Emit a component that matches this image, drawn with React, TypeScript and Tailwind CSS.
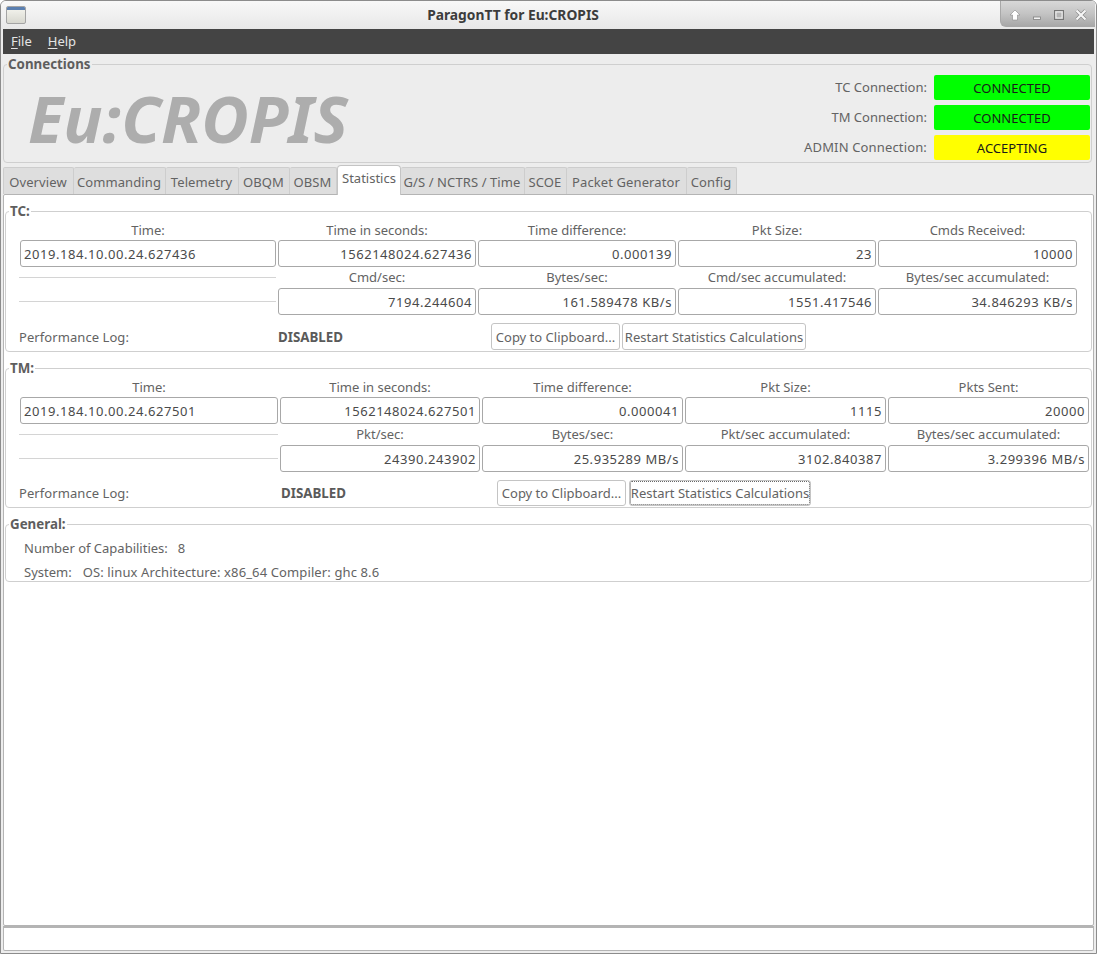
import type { ReactNode } from 'react'

const FONT = "font-['Noto_Sans',sans-serif]"

const TABS = [
  { name: 'Overview', w: 'w-[71px]' },
  { name: 'Commanding', w: 'w-[92px]' },
  { name: 'Telemetry', w: 'w-[73px]' },
  { name: 'OBQM', w: 'w-[51px]' },
  { name: 'OBSM', w: 'w-[47px]' },
  { name: 'Statistics', w: 'w-[64px]', active: true },
  { name: 'G/S / NCTRS / Time', w: 'w-[124px]' },
  { name: 'SCOE', w: 'w-[42px]' },
  { name: 'Packet Generator', w: 'w-[120px]' },
  { name: 'Config', w: 'w-[50px]' },
]

function Label({ children, tall }: { children: ReactNode; tall?: boolean }) {
  return (
    <div className={`${tall ? 'h-[21px]' : 'h-[20px]'} leading-[20px] text-center whitespace-nowrap`}>{children}</div>
  )
}

function Field({ value, left }: { value: string; left?: boolean }) {
  return (
    <div
      className={`h-[27px] leading-[27px] border border-[#a8a8a8] rounded-[3px] bg-white text-[#4a4a4a] px-[3px] whitespace-nowrap overflow-hidden tracking-[0.55px] ${
        left ? 'text-left' : 'text-right'
      }`}
    >
      {value}
    </div>
  )
}

function Status({ label, value, color, spacing }: { label: string; value: string; color: string; spacing: string }) {
  return (
    <div className="flex items-center h-[25px] justify-end">
      <span className={`mr-[7px] mt-[1px] ${spacing}`}>{label}</span>
      <div className={`w-[156px] h-[25px] leading-[26px] text-center rounded-[2px] text-[#1a1a1a] ${color}`}>
        {value}
      </div>
    </div>
  )
}

function Group({ title, className, children }: { title: string; className: string; children: ReactNode }) {
  return (
    <div className={`relative border border-[#cfcfcf] rounded-[4px] ${className}`}>
      <div className="absolute left-[3px] top-[-11px] h-[20px] leading-[20px] px-[1px] bg-white font-bold text-[#5e5e5e] text-[13.33px]">
        {title}
      </div>
      {children}
    </div>
  )
}

type StatsProps = {
  cols: string
  time: string
  seconds: string
  diff: string
  size: string
  countLabel: string
  count: string
  rateLabel: string
  rate: string
  bytes: string
  rateAccLabel: string
  rateAcc: string
  bytesAcc: string
  logWidth: string
  disabledWidth: string
  textOffset: string
  buttonSize: string
  buttonGap: string
  restartW: string
  focused?: boolean
}

function Stats(p: StatsProps) {
  return (
    <>
      <div className={`grid ${p.cols} gap-x-[2px] pl-[14px]`}>
        <Label>Time:</Label>
        <Label>Time in seconds:</Label>
        <Label>Time difference:</Label>
        <Label>Pkt Size:</Label>
        <Label>{p.countLabel}</Label>
        <Field value={p.time} left />
        <Field value={p.seconds} />
        <Field value={p.diff} />
        <Field value={p.size} />
        <Field value={p.count} />
        <div className="-ml-[1px]">
          <div className="mt-[10px] h-px bg-[#d4d4d4]" />
          <div className="mt-[23px] h-px bg-[#d4d4d4]" />
        </div>
        <div>
          <Label tall>{p.rateLabel}</Label>
          <Field value={p.rate} />
        </div>
        <div>
          <Label tall>Bytes/sec:</Label>
          <Field value={p.bytes} />
        </div>
        <div>
          <Label tall>{p.rateAccLabel}</Label>
          <Field value={p.rateAcc} />
        </div>
        <div>
          <Label tall>Bytes/sec accumulated:</Label>
          <Field value={p.bytesAcc} />
        </div>
      </div>
      <div className="flex items-start mt-[8px] pl-[13px] leading-[27px]">
        <span className={`${p.logWidth} ${p.textOffset} tracking-[0.07px]`}>Performance Log:</span>
        <span className={`${p.disabledWidth} ${p.textOffset} font-bold text-[13.33px] text-[#5a5a5a]`}>DISABLED</span>
        <div className={`flex ${p.buttonGap}`}>
          <div className={`w-[129px] ${p.buttonSize} text-center border border-[#c4c4c4] rounded-[3px] whitespace-nowrap`}>
            Copy to Clipboard...
          </div>
          <div
            className={`${p.restartW} ${p.buttonSize} text-center rounded-[3px] whitespace-nowrap border border-[#c4c4c4] ${
              p.focused ? 'outline-1 outline-dotted outline-[#666] -outline-offset-2' : ''
            }`}
          >
            Restart Statistics Calculations
          </div>
        </div>
      </div>
    </>
  )
}

function TitleIcon() {
  return (
    <div className="w-[20px] h-[18px] ml-[5px] shrink-0 border border-[#a4a4a4] rounded-[2px] bg-gradient-to-b from-[#f6f6f0] to-[#d8d8d0] overflow-hidden">
      <div className="h-[3px] bg-[#5a7fb0]" />
    </div>
  )
}

function WindowButtons() {
  return (
    <div className="self-start shrink-0 w-[95px] h-[26px] mr-[1px] rounded-bl-[6px] border-l border-b border-[#a8a8a8] bg-gradient-to-b from-[#d8d8d8] via-[#c4c4c4] to-[#a8a8a8]">
      <svg width="94" height="25" viewBox="0 0 94 25" fill="none">
        <path d="M14 9 L19 14 H16.5 V19 H11.5 V14 H9 Z" fill="#fff" stroke="#8a8a8a" strokeWidth="0.6" />
        <rect x="32.5" y="16" width="7" height="2.5" fill="#f4f4f4" stroke="#808080" strokeWidth="0.8" />
        <rect x="53.5" y="9.5" width="9" height="9" fill="none" stroke="#767676" strokeWidth="1" />
        <rect x="55" y="11" width="6" height="6" fill="#b4b4b4" stroke="#f0f0f0" strokeWidth="1" />
        <path d="M75.5 9.5 L84.5 18.5 M84.5 9.5 L75.5 18.5" stroke="#8a8a8a" strokeWidth="3.4" />
        <path d="M75.5 9.5 L84.5 18.5 M84.5 9.5 L75.5 18.5" stroke="#f6f6f6" strokeWidth="2.2" />
      </svg>
    </div>
  )
}

export default function App() {
  return (
    <div className={`${FONT} w-[1097px] h-[954px] overflow-hidden bg-[#ededed] text-[13px] text-[#636363] border border-[#8c8c8c] rounded-t-[6px] flex flex-col`}>
      {/* title bar */}
      <div className="h-[28px] shrink-0 flex items-center bg-gradient-to-b from-[#f8f8f8] to-[#e8e8e8]">
        <TitleIcon />
        <div className="flex-1 text-center font-bold text-[13.8px] leading-[20px] text-[#3c3c3c]">
          ParagonTT for Eu:CROPIS
        </div>
        <WindowButtons />
      </div>

      {/* menu bar */}
      <div className="h-[25px] shrink-0 mx-[2px] bg-[#444444] text-[#e4e4e4] flex items-center pl-[8px] gap-[16px] leading-[25px]">
        <span><span className="underline underline-offset-2">F</span>ile</span>
        <span><span className="underline underline-offset-2">H</span>elp</span>
      </div>

      {/* connections */}
      <div className="relative h-[99px] shrink-0 mt-[10px] ml-[2px] mr-[4px] border border-[#cfcfcf] rounded-[4px] flex justify-between">
        <div className="absolute left-[3px] top-[-11px] h-[20px] leading-[20px] px-[1px] bg-[#ededed] font-bold text-[13.33px] text-[#5e5e5e]">
          Connections
        </div>
        <div className="ml-[24px] mt-[15px] text-[65px] leading-[76px] font-bold italic text-[#adadad] whitespace-nowrap">
          Eu:CROPIS
        </div>
        <div className="flex flex-col gap-[5px] mt-[10px] mr-[1px]">
          <Status label="TC Connection:" value="CONNECTED" color="bg-[#00ff00]" spacing="tracking-[0px]" />
          <Status label="TM Connection:" value="CONNECTED" color="bg-[#00ff00]" spacing="tracking-[0px]" />
          <Status label="ADMIN Connection:" value="ACCEPTING" color="bg-[#ffff00]" spacing="tracking-[0.15px]" />
        </div>
      </div>

      {/* tabs */}
      <div className="flex h-[30px] shrink-0 mt-[1px] ml-[2px] items-end">
        {TABS.map(t =>
          t.active ? (
            <div key={t.name} className={`${t.w} h-[30px] leading-[25px] text-center bg-white border border-b-0 border-[#c4c4c4] rounded-t-[4px] relative z-10 -mb-px`}>
              {t.name}
            </div>
          ) : (
            <div key={t.name} className={`${t.w} h-[27px] leading-[28px] text-center pr-[1px] tracking-[0.1px] bg-[#dedede] border-r border-t border-[#cdcdcd] first:border-l rounded-t-[2px] whitespace-nowrap`}>
              {t.name}
            </div>
          )
        )}
      </div>

      {/* pane */}
      <div className="flex-1 ml-[2px] mr-[2px] bg-white border border-[#b4b4b4] rounded-[2px] pt-[16px] min-h-0">
        <Group title="TC:" className="h-[141px] ml-[1px] w-[1087px]">
          <div className="pt-[8px]">
            <Stats
              cols="grid-cols-[256px_198px_198px_198px_199px]"
              time="2019.184.10.00.24.627436"
              seconds="1562148024.627436"
              diff="0.000139"
              size="23"
              countLabel="Cmds Received:"
              count="10000"
              rateLabel="Cmd/sec:"
              rate="7194.244604"
              bytes="161.589478 KB/s"
              rateAccLabel="Cmd/sec accumulated:"
              rateAcc="1551.417546"
              bytesAcc="34.846293 KB/s"
              logWidth="w-[259px]"
              disabledWidth="w-[213px]"
              textOffset="mt-[1px]"
              buttonSize="h-[27px] leading-[26px]"
              buttonGap="gap-[2px]"
              restartW="w-[184px]"
            />
          </div>
        </Group>
        <Group title="TM:" className="h-[140px] mt-[16px] ml-[1px] w-[1087px]">
          <div className="pt-[8px]">
            <Stats
              cols="grid-cols-[258px_200px_201px_201px_201px]"
              time="2019.184.10.00.24.627501"
              seconds="1562148024.627501"
              diff="0.000041"
              size="1115"
              countLabel="Pkts Sent:"
              count="20000"
              rateLabel="Pkt/sec:"
              rate="24390.243902"
              bytes="25.935289 MB/s"
              rateAccLabel="Pkt/sec accumulated:"
              rateAcc="3102.840387"
              bytesAcc="3.299396 MB/s"
              logWidth="w-[262px]"
              disabledWidth="w-[216px]"
              textOffset="mt-0"
              buttonSize="h-[26px] leading-[25px]"
              buttonGap="gap-[3px]"
              restartW="w-[182px]"
              focused
            />
          </div>
        </Group>
        <Group title="General:" className="h-[58px] mt-[16px] ml-[1px] w-[1087px]">
          <div className="pl-[18px] pt-[11px] leading-[24px]">
            <div className="whitespace-nowrap">
              Number of Capabilities:<span className="ml-[10px]">8</span>
            </div>
            <div className="whitespace-nowrap">
              System:<span className="ml-[11px] tracking-[0.12px]">OS: linux Architecture: x86_64 Compiler: ghc 8.6</span>
            </div>
          </div>
        </Group>
      </div>

      {/* status bar */}
      <div className="h-[25px] shrink-0 mx-[2px] mb-[2px] bg-white border border-t-2 border-[#b4b4b4] rounded-b-[2px]" />
    </div>
  )
}
